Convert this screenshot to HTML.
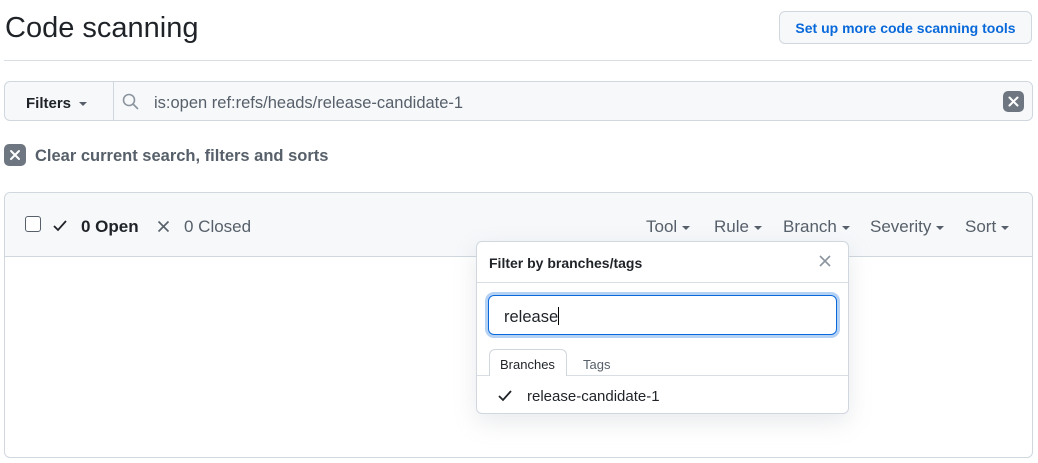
<!DOCTYPE html>
<html><head><style>
*{box-sizing:border-box;margin:0;padding:0}
body{width:1038px;height:463px;background:#fff;font-family:"Liberation Sans",sans-serif;color:#1f2328;position:relative;overflow:hidden}
.a{position:absolute}
.caret{display:inline-block;width:0;height:0;border-left:4px solid transparent;border-right:4px solid transparent;border-top:4px solid currentColor;vertical-align:middle;margin-left:5px}
.m{position:absolute;top:217px;font-size:17px;color:#57606a}
</style></head><body>
<div class="a" style="left:5px;top:12px;font-size:29px;color:#1f2328">Code scanning</div>
<div class="a" style="left:779px;top:11px;width:253px;height:33px;border:1px solid #d0d7de;border-radius:6px;background:#f6f8fa;color:#0969da;font-size:14px;font-weight:bold;text-align:center;line-height:33px">Set up more code scanning tools</div>
<div class="a" style="left:4px;top:60px;width:1028px;height:1px;background:#d8dee4"></div>

<div class="a" style="left:4px;top:81px;width:1029px;height:40px;border:1px solid #d0d7de;border-radius:6px;background:#f6f8fa"></div>
<div class="a" style="left:113px;top:82px;width:919px;height:38px;border-left:1px solid #d0d7de;background:#f6f8fa;border-radius:0 6px 6px 0"></div>
<div class="a" style="left:26px;top:95px;font-size:15px;font-weight:bold">Filters<span class="caret" style="margin-left:8px;color:#57606a"></span></div>
<svg class="a" style="left:122px;top:93px" width="17" height="17" viewBox="0 0 17 17"><circle cx="7" cy="7" r="5.5" fill="none" stroke="#8c959f" stroke-width="1.6"/><path d="M11 11l4.5 4.5" stroke="#8c959f" stroke-width="1.6" stroke-linecap="round"/></svg>
<div class="a" style="left:154px;top:94px;font-size:16.5px;color:#57606a">is:open ref:refs/heads/release-candidate-1</div>
<svg class="a" style="left:1003px;top:91px" width="21" height="21" viewBox="0 0 21 21"><rect width="21" height="21" rx="5" fill="#6e7781"/><path d="M6.5 6.5l8 8M14.5 6.5l-8 8" stroke="#fff" stroke-width="2" stroke-linecap="round"/></svg>

<svg class="a" style="left:4px;top:144px" width="22" height="22" viewBox="0 0 22 22"><rect width="22" height="22" rx="5" fill="#6e7781"/><path d="M7 7l8 8M15 7l-8 8" stroke="#fff" stroke-width="2" stroke-linecap="round"/></svg>
<div class="a" style="left:35px;top:147px;font-size:16.5px;font-weight:bold;color:#57606a">Clear current search, filters and sorts</div>

<div class="a" style="left:4px;top:192px;width:1029px;height:266px;border:1px solid #d0d7de;border-radius:6px"></div>
<div class="a" style="left:5px;top:193px;width:1027px;height:64px;background:#f6f8fa;border-bottom:1px solid #d0d7de;border-radius:6px 6px 0 0"></div>
<div class="a" style="left:25px;top:216px;width:16px;height:16px;border:1px solid #57606a;border-radius:3px;background:#fff"></div>
<svg class="a" style="left:52px;top:219px" width="16" height="14" viewBox="0 0 16 14"><path d="M2 7l4 4 8-9" fill="none" stroke="#1f2328" stroke-width="1.8"/></svg>
<div class="a" style="left:81px;top:217px;font-size:17px;font-weight:bold">0 Open</div>
<svg class="a" style="left:157px;top:220px" width="13" height="13" viewBox="0 0 13 13"><path d="M1.5 1.5l10 10M11.5 1.5l-10 10" stroke="#57606a" stroke-width="1.6"/></svg>
<div class="a" style="left:184px;top:217px;font-size:17px;color:#57606a">0 Closed</div>
<div class="m" style="left:646px">Tool<span class="caret"></span></div>
<div class="m" style="left:714px">Rule<span class="caret"></span></div>
<div class="m" style="left:783px">Branch<span class="caret"></span></div>
<div class="m" style="left:870px">Severity<span class="caret"></span></div>
<div class="m" style="left:965px">Sort<span class="caret"></span></div>

<div class="a" style="left:476px;top:241px;width:373px;height:173px;background:#fff;border:1px solid #d0d7de;border-radius:6px;box-shadow:0 8px 24px rgba(140,149,159,.2)"></div>
<div class="a" style="left:489px;top:255px;font-size:14px;font-weight:bold">Filter by branches/tags</div>
<svg class="a" style="left:819px;top:255px" width="12" height="12" viewBox="0 0 12 12"><path d="M1 1l10 10M11 1L1 11" stroke="#8c959f" stroke-width="1.6"/></svg>
<div class="a" style="left:477px;top:282px;width:371px;height:1px;background:#d8dee4"></div>
<div class="a" style="left:488px;top:295px;width:349px;height:40px;border:1px solid #0969da;border-radius:6px;box-shadow:0 0 0 3px rgba(9,105,218,.3)"></div>
<div class="a" style="left:504px;top:307px;font-size:16.5px;color:#1f2328">release<span style="display:inline-block;width:1px;height:18px;background:#000;vertical-align:-3px"></span></div>
<div class="a" style="left:477px;top:375px;width:371px;height:1px;background:#d8dee4"></div>
<div class="a" style="left:489px;top:349px;width:78px;height:27px;border:1px solid #d0d7de;border-bottom:none;border-radius:6px 6px 0 0;background:#fff"></div>
<div class="a" style="left:500px;top:357px;font-size:13px">Branches</div>
<div class="a" style="left:583px;top:357px;font-size:13px;color:#57606a">Tags</div>
<svg class="a" style="left:497px;top:389px" width="16" height="14" viewBox="0 0 16 14"><path d="M2 7l4 4 8-9" fill="none" stroke="#1f2328" stroke-width="1.8"/></svg>
<div class="a" style="left:527px;top:388px;font-size:15px">release-candidate-1</div>
</body></html>
